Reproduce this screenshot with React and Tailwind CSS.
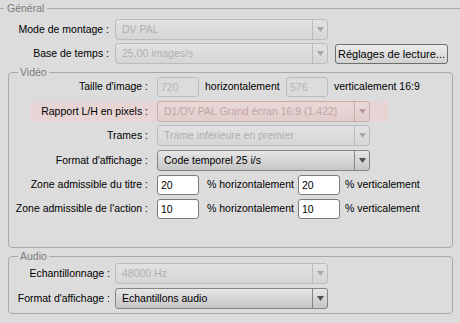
import React from "react";

function Arrow({ enabled, pink }) {
    const col = enabled ? "#505050" : pink ? "#b89a9a" : "#a8a8a8";
    return (
        <svg width="7" height="5" viewBox="0 0 7 5">
            <path d="M0 0 H7 L3.5 5 Z" fill={col} />
        </svg>
    );
}

function Select({ value, enabled = false, pink = false }) {
    const box = enabled
        ? "border-[#858585] bg-gradient-to-b from-[#e6e6e6] to-[#c6c6c6] text-black"
        : pink
        ? "border-[#c9acac] bg-gradient-to-b from-[#ead8d8] to-[#e2cccc] text-[#c3a4a4]"
        : "border-[#bcbcbc] bg-gradient-to-b from-[#e2e2e2] to-[#d6d6d6] text-[#b0b0b0]";
    const divider = enabled ? "border-[#858585]" : pink ? "border-[#c9acac]" : "border-[#bcbcbc]";
    return (
        <div className={`flex w-[213px] h-[21px] rounded-[3px] border ${box}`}>
            <div className="flex-1 pl-[6px] leading-[19px] truncate">{value}</div>
            <div className={`w-[15px] flex items-center justify-center border-l ${divider}`}>
                <Arrow enabled={enabled} pink={pink} />
            </div>
        </div>
    );
}

function Field({ value, enabled = false }) {
    const cls = enabled
        ? "bg-white border-[#7c7c7c] text-black"
        : "border-[#bcbcbc] text-[#b4b4b4]";
    return (
        <div className={`w-[42px] h-[20px] rounded-[3px] border pl-[3px] leading-[18px] ${cls}`}>{value}</div>
    );
}

function Group({ title, className, children }) {
    return (
        <div className={`relative mx-[8px] w-[445px] rounded-[4px] border border-[#a9a9a9] ${className}`}>
            <span className="absolute left-[9px] top-[-8px] px-[2px] bg-[#dcdcdc] text-[#7b7b7b] leading-[14px]">{title}</span>
            {children}
        </div>
    );
}

function Safe({ label, value }) {
    return (
        <div className="flex items-center h-[20px] mt-[4px]">
            <div className="w-[139px] text-right">{label}</div>
            <div className="ml-[9px]"><Field value={value} enabled /></div>
            <span className="ml-[8px] w-[91px]">% horizontalement</span>
            <Field value={value} enabled />
            <span className="ml-[5px]">% verticalement</span>
        </div>
    );
}

export default function App() {
    return (
        <div
            className="w-[460px] h-[323px] bg-[#dcdcdc] text-black text-[10.5px] overflow-hidden"
            style={{ fontFamily: '"Liberation Sans", Arial, sans-serif' }}
        >
            {/* Général */}
            <div className="flex items-center h-[16px] pt-[1px]">
                <div className="w-[4px] h-px bg-[#a9a9a9]" />
                <span className="px-[3px] text-[#7b7b7b]">Général</span>
                <div className="flex-1 h-px bg-[#a9a9a9]" />
            </div>
            <div className="flex items-center mt-[3px]">
                <div className="w-[110px] text-right pr-[1px]">Mode de montage :</div>
                <div className="ml-[5px]"><Select value="DV PAL" /></div>
            </div>
            <div className="flex items-center mt-[3px]">
                <div className="w-[110px] text-right pr-[1px]">Base de temps :</div>
                <div className="ml-[5px]"><Select value="25,00 images/s" /></div>
                <button className="ml-[7px] w-[113px] h-[20px] rounded-[3px] border border-[#6e6e6e] bg-gradient-to-b from-[#ececec] to-[#d2d2d2] leading-[18px] text-center text-[11px]">
                    Réglages de lecture...
                </button>
            </div>

            {/* Vidéo */}
            <Group title="Vidéo" className="mt-[8px] h-[176px] pt-[4px]">
                <div className="flex items-center h-[20px]">
                    <div className="w-[139px] text-right">Taille d'image :</div>
                    <div className="ml-[9px]"><Field value="720" /></div>
                    <span className="ml-[6px] w-[81px]">horizontalement</span>
                    <Field value="576" />
                    <span className="ml-[6px]">verticalement 16:9</span>
                </div>
                <div className="flex items-center h-[21px] mt-[4px] ml-[21px] w-[358px] bg-[#e7d4d4]">
                    <div className="w-[118px] text-right">Rapport L/H en pixels :</div>
                    <div className="ml-[9px]"><Select value="D1/DV PAL Grand écran 16:9 (1,422)" pink /></div>
                </div>
                <div className="flex items-center mt-[3px]">
                    <div className="w-[139px] text-right">Trames :</div>
                    <div className="ml-[9px]"><Select value="Trame inférieure en premier" /></div>
                </div>
                <div className="flex items-center mt-[4px]">
                    <div className="w-[139px] text-right">Format d'affichage :</div>
                    <div className="ml-[9px]"><Select value="Code temporel 25 i/s" enabled /></div>
                </div>
                <Safe label="Zone admissible du titre :" value="20" />
                <Safe label="Zone admissible de l'action :" value="10" />
            </Group>

            {/* Audio */}
            <Group title="Audio" className="mt-[8px] h-[58px] pt-[6px]">
                <div className="flex items-center">
                    <div className="w-[101px] text-right">Echantillonnage :</div>
                    <div className="ml-[5px]"><Select value="48000 Hz" /></div>
                </div>
                <div className="flex items-center mt-[4px]">
                    <div className="w-[101px] text-right">Format d'affichage :</div>
                    <div className="ml-[5px]"><Select value="Echantillons audio" enabled /></div>
                </div>
            </Group>
        </div>
    );
}
